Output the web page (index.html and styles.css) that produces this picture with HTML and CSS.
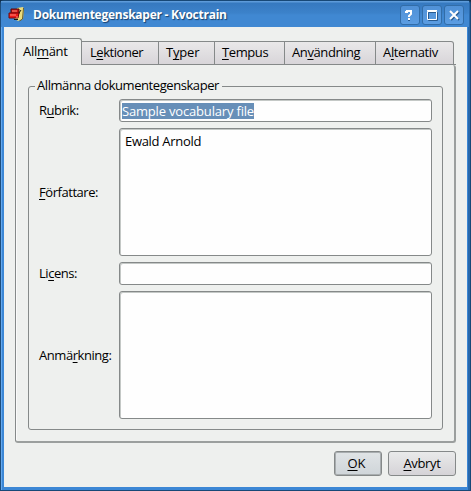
FILE: index.html
```html
<!DOCTYPE html>
<html lang="sv">
<head>
<meta charset="utf-8">
<title>Dokumentegenskaper - Kvoctrain</title>
<link rel="stylesheet" href="styles.css">
</head>
<body>
<div class="window">
  <header class="titlebar">
    <svg class="app-icon" width="18" height="18" viewBox="0 0 18 18">
      <path d="M9 2l6-1 1 2-1 10-5 2-3-2z" fill="#eadc7d"/>
      <path d="M15.500 2l-1 11-3 2" fill="none" stroke="#695e28"/>
      <path d="M3 3h8v5H3z" fill="#cc1515" stroke="#510808"/>
      <path d="M1 7h10l-1 5H1z" fill="#ef1919" stroke="#710909"/>
      <path d="M4 5h5M2 9h6M8 11h2" stroke="#ff8c79"/>
      <path d="M6 13.500h4M11 7l2-3" stroke="#191913"/>
    </svg>
    <h1 class="title">Dokumentegenskaper - Kvoctrain</h1>
    <div class="controls">
      <button class="control" aria-label="Hjälp"><svg width="18" height="18" viewBox="1 0 18 18"><path class="icon-shadow" d="M6 7V6h1V5h4v3l-2 2v1M9 13v2"/><path d="M6 7V6h1V5h4v3l-2 2v1M9 12v2"/></svg></button>
      <button class="control" aria-label="Maximera"><svg width="18" height="18" viewBox="0 0 18 18"><path class="icon-shadow thin" d="M5.500 6.500h9v8h-9z"/><path class="thin" d="M4.500 5.500h9v8h-9zM4 4.500h10"/></svg></button>
      <button class="control" aria-label="Stäng"><svg width="18" height="18" viewBox="0 0 18 18"><path class="icon-shadow" d="M6 6l8 8m0-8l-8 8"/><path d="M5 5l8 8m0-8l-8 8"/></svg></button>
    </div>
  </header>
  <main class="content">
    <nav class="tabs">
      <div class="tab active w-general"><span>All<u>m</u>änt</span></div>
      <div class="tab w-lessons"><span>L<u>e</u>ktioner</span></div>
      <div class="tab w-types"><span>T<u>y</u>per</span></div>
      <div class="tab w-tense"><span><u>T</u>empus</span></div>
      <div class="tab w-usage"><span>An<u>v</u>ändning</span></div>
      <div class="tab w-options"><span>A<u>l</u>ternativ</span></div>
    </nav>
    <section class="panel">
      <fieldset class="group">
        <legend>Allmänna dokumentegenskaper</legend>
        <div class="form">
          <label>R<u>u</u>brik:</label>
          <div class="field"><span class="selection">Sample vocabulary file</span></div>
          <label><u>F</u>örfattare:</label>
          <div class="field area"><span>Ewald Arnold</span></div>
          <label>Li<u>c</u>ens:</label>
          <div class="field"></div>
          <label>Anmä<u>r</u>kning:</label>
          <div class="field area"></div>
        </div>
      </fieldset>
    </section>
    <footer class="actions">
      <button class="button ok"><span><u>O</u>K</span></button>
      <button class="button cancel"><span><u>A</u>vbryt</span></button>
    </footer>
  </main>
</div>
</body>
</html>
```
FILE: styles.css
```css
* { box-sizing: border-box; }
body { margin: 0; background: #102b46; font: 13px/18px "Open Sans", "Noto Sans", sans-serif; color: #000; }
button { font: inherit; color: inherit; padding: 0; margin: 0; }
span { white-space: nowrap; }
u { text-decoration: underline; text-decoration-thickness: 1px; text-underline-offset: 2px; text-decoration-skip-ink: none; }
.window { width: 471px; height: 491px; padding: 0 3px 4px 4px; border: solid #174877; border-width: 1px 1px 1px 0; border-radius: 4px 4px 0 0; background: linear-gradient(90deg, #1d4d7c 0 1px, #65a9ee 1px 2px, #3c87d5 2px 468px, #2868aa 468px); }
.titlebar { display: flex; align-items: center; height: 26px; margin: 0 -2px 0 -3px; padding: 2px 5px 0 7px; background: linear-gradient(#5d9bda 0 1px, #3679c0 2px, #3c82ca 12px, #4088d2 14px, #4088d2); }
.app-icon { flex: none; }
.title { margin: 0 0 0 7px; flex: 1; color: #fff; font: bold 12px/18px "Open Sans", sans-serif; letter-spacing: -.25px; text-shadow: 1px 1px 1px #17416c; white-space: nowrap; }
.controls { display: flex; gap: 2px; }
.control { width: 20px; height: 20px; border: 1px solid #326da8; border-radius: 3px; background: linear-gradient(#5091d7, #5b9de2); }
.control svg { display: block; fill: none; stroke: #fff; stroke-width: 2; }
.control .thin { stroke-width: 1; }
.control .icon-shadow { stroke: #285b90; }
.content { height: 460px; padding: 11px 11px 0 11px; background: #eef0ee; }
.tabs { display: flex; align-items: flex-end; height: 27px; }
.tabs::after { content: ""; flex: 1; height: 1px; background: #858989; }
.tab { height: 24px; padding: 1px 0 0 7px; border: 1px solid #858989; border-left: 0; background: linear-gradient(#e9e8e9, #d8d5d9); }
.tab:last-child { border-radius: 0 3px 0 0; }
.tab.active { height: 27px; padding: 3px 0 0 7px; border-left: 1px solid #858989; border-bottom: 0; border-radius: 3px 3px 0 0; background: #eef0ee; }
.w-general { width: 67px; letter-spacing: -.3px; }
.w-lessons { width: 77px; padding-left: 8px; letter-spacing: -.45px; }
.w-types { width: 56px; letter-spacing: -.2px; }
.w-tense { width: 70px; letter-spacing: -.4px; }
.w-usage { width: 91px; letter-spacing: -.4px; }
.w-options { width: 78px; letter-spacing: -.35px; }
.panel { height: 378px; padding: 12px 12px; border: 1px solid #858989; border-top: 0; border-right: 2px solid #9b9f9e; border-bottom: 2px solid #9b9f9e; border-radius: 0 3px 3px 3px; box-shadow: inset 1px 0 #fafafa; }
.group { width: 415px; height: 353px; margin: 0; padding: 4px 10px 0; border: 1px solid #858989; border-radius: 3px; }
legend { padding: 0 3px 0 2px; margin-left: -4px; height: 18px; line-height: 16px; letter-spacing: -.43px; white-space: nowrap; }
.form { display: grid; grid-template-columns: 80px 313px; grid-template-rows: 23px 128px 23px 128px; row-gap: 6px; align-items: center; }
label { padding-bottom: 1px; letter-spacing: -.45px; white-space: nowrap; }
.field { height: 100%; padding: 3px 2px; border: 1px solid #858989; border-radius: 3px; background: #fefefe; box-shadow: inset 1px 1px #c4c8c6; letter-spacing: -.3px; }
.area { padding: 3px 5px; }
.selection { display: block; width: 132px; height: 16px; line-height: 16px; color: #fff; background: #678fb8; letter-spacing: -.18px; }
.actions { display: flex; justify-content: flex-end; gap: 6px; padding-top: 8px; }
.button { height: 25px; padding-bottom: 2px; border: 1px solid #858989; border-radius: 3px; background: linear-gradient(#e9eaea, #d5d3d7); letter-spacing: -.35px; }
.ok { width: 48px; padding-right: 3px; background: linear-gradient(#e0e4e6, #cfd5d9); box-shadow: inset 0 0 0 1px #a8adaf; letter-spacing: 0; }
.cancel { width: 68px; }
```
